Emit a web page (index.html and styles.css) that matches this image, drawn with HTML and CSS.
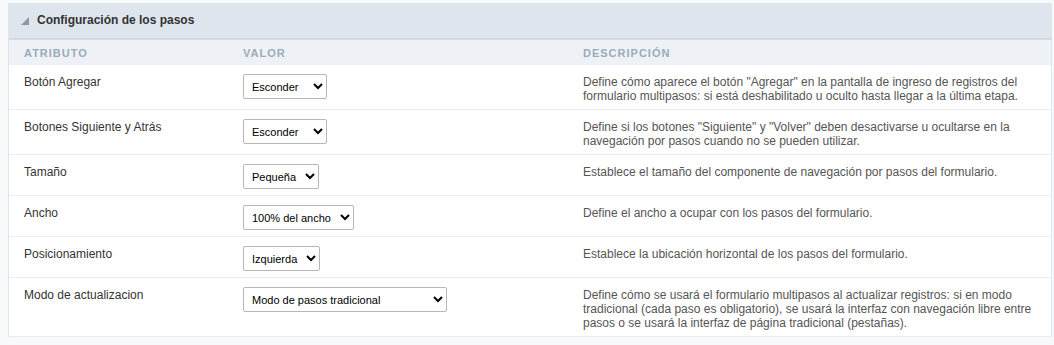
FILE: index.html
```html
<!DOCTYPE html>
<html lang="es">
<head>
<meta charset="utf-8">
<title>Configuración de los pasos</title>
<link rel="stylesheet" href="styles.css">
</head>
<body>
<section class="panel">
  <header class="panel-head">
    <svg class="toggle" width="8" height="8" viewBox="0 0 8 8"><polygon points="8,0 8,8 0,8" fill="#8d98a4"/></svg>
    <h2>Configuración de los pasos</h2>
  </header>
  <div class="row thead">
    <div class="cell">Atributo</div>
    <div class="cell">Valor</div>
    <div class="cell">Descripción</div>
  </div>
  <div class="row">
    <div class="cell attr">Botón Agregar</div>
    <div class="cell"><select class="sel w84"><option>Esconder</option></select></div>
    <div class="cell desc">Define cómo aparece el botón "Agregar" en la pantalla de ingreso de registros del formulario multipasos: si está deshabilitado u oculto hasta llegar a la última etapa.</div>
  </div>
  <div class="row">
    <div class="cell attr">Botones Siguiente y Atrás</div>
    <div class="cell"><select class="sel w84"><option>Esconder</option></select></div>
    <div class="cell desc">Define si los botones "Siguiente" y "Volver" deben desactivarse u ocultarse en la navegación por pasos cuando no se pueden utilizar.</div>
  </div>
  <div class="row">
    <div class="cell attr">Tamaño</div>
    <div class="cell"><select class="sel w76"><option>Pequeña</option></select></div>
    <div class="cell desc">Establece el tamaño del componente de navegación por pasos del formulario.</div>
  </div>
  <div class="row">
    <div class="cell attr">Ancho</div>
    <div class="cell"><select class="sel w111"><option>100% del ancho</option></select></div>
    <div class="cell desc">Define el ancho a ocupar con los pasos del formulario.</div>
  </div>
  <div class="row">
    <div class="cell attr">Posicionamiento</div>
    <div class="cell"><select class="sel w77"><option>Izquierda</option></select></div>
    <div class="cell desc">Establece la ubicación horizontal de los pasos del formulario.</div>
  </div>
  <div class="row">
    <div class="cell attr">Modo de actualizacion</div>
    <div class="cell"><select class="sel w204"><option>Modo de pasos tradicional</option></select></div>
    <div class="cell desc">Define cómo se usará el formulario multipasos al actualizar registros: si en modo tradicional (cada paso es obligatorio), se usará la interfaz con navegación libre entre pasos o se usará la interfaz de página tradicional (pestañas).</div>
  </div>
</section>
</body>
</html>
```

FILE: styles.css
```css
html, body {
  background: #f8f9fb;
}
body {
  margin: 3px 2px 0 8px;
  font-family: "Liberation Sans", Arial, sans-serif;
  font-size: 12px;
  color: #333;
}
.panel {
  background: #fff;
  border-left: 1px solid #dfe5ec;
  border-right: 1px solid #dfe5ec;
}
.panel-head {
  display: flex;
  align-items: center;
  height: 34px;
  padding-left: 12px;
  padding-bottom: 1px;
  background: #dfe5ed;
  border-bottom: 2px solid #d2dae3;
}
.toggle {
  margin-right: 8px;
  margin-top: 1px;
}
.panel-head h2 {
  margin: 0;
  font-size: 12px;
  font-weight: bold;
  color: #333;
}
.row {
  display: grid;
  grid-template-columns: 219px 340px 1fr;
  border-bottom: 1px solid #eaeef2;
}
.cell {
  padding: 10px 15px 6px;
  line-height: 14px;
}
.thead {
  background: #eef2f6;
  border-bottom: none;
  height: 25px;
}
.thead .cell {
  padding-top: 6px;
  padding-bottom: 5px;
  text-transform: uppercase;
  font-size: 11px;
  letter-spacing: 1px;
  font-weight: bold;
  color: #9aabb9;
}
.attr {
  color: #333;
}
.desc {
  color: #555;
}
.sel {
  display: block;
  margin-top: -1px;
  height: 25px;
  font-family: "Liberation Sans", Arial, sans-serif;
  font-size: 11px;
  color: #000;
  background: #fff;
  border: 1px solid #b7b7b7;
  border-radius: 2px;
  padding: 0 4px;
}
.w84 { width: 84px; }
.w76 { width: 76px; }
.w111 { width: 111px; }
.w77 { width: 77px; }
.w204 { width: 204px; }
```
